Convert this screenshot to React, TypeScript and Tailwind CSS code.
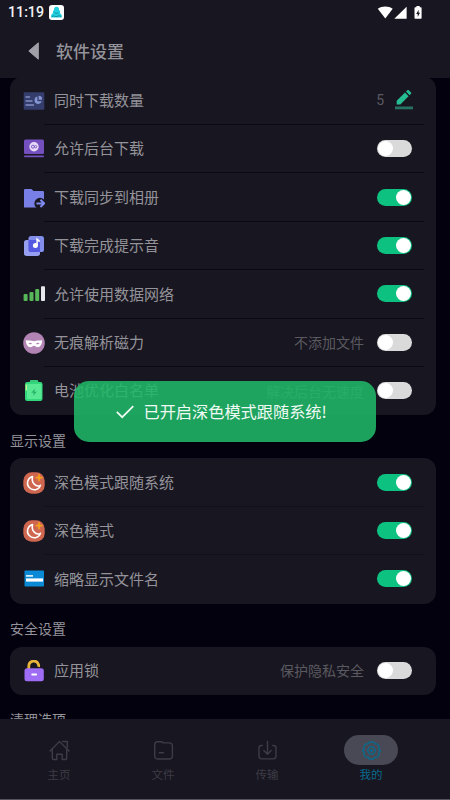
import React, { useState } from 'react';

interface SettingItem {
  id: string;
  label: string;
  icon: React.ReactNode;
  note?: string;
  checked?: boolean;
  count?: number;
}

interface SettingGroup {
  title?: string;
  soft?: boolean;
  items: SettingItem[];
}

const TaskIcon = () => (
  <svg viewBox="0 0 22 22" className="size-[22px]">
    <rect x="0.7" y="2.2" width="20.6" height="17.6" rx="1" fill="#343d6b" />
    <path d="M3 7h3.6M3 11h6M3 15h7.5" stroke="#8290c4" strokeWidth="1.3" strokeLinecap="round" />
    <path d="M14.4 6.6a3.7 3.7 0 1 0 4.400 4.600h-4.400z" fill="#8496d4" />
    <path d="M15.600 5.700a3.700 3.700 0 0 1 3.500 4h-3.500z" fill="#8496d4" />
  </svg>
);

const BackgroundIcon = () => (
  <svg viewBox="0 0 22 22" className="size-[22px]">
    <rect x="1" y="1.500" width="20" height="14.5" rx="1.5" fill="#7450bf" />
    <rect x="1" y="17.500" width="20" height="1.7" rx="0.8" fill="#7450bf" />
    <circle cx="11" cy="8.7" r="4.7" fill="#e6daf8" />
    <circle cx="9.900" cy="8.700" r="1.500" fill="none" stroke="#7450bf" strokeWidth="0.900" />
    <circle cx="12.600" cy="8.700" r="1.200" fill="none" stroke="#7450bf" strokeWidth="0.800" />
  </svg>
);

const AlbumIcon = () => (
  <svg viewBox="0 0 22 22" className="size-[22px]">
    <path d="M1 3.2a1.2 1.2 0 0 1 1.2-1.2h6.2l2.2 2h9.2a1.2 1.2 0 0 1 1.2 1.2V20.5H1z" fill="#7880e8" />
    <circle cx="17" cy="16.4" r="5.600" fill="#181620" />
    <path d="M13.4 16.4h7.400M17.400 12.800l3.800 3.600-3.800 3.600" fill="none" stroke="#7f8af0" strokeWidth="2" />
  </svg>
);

const SoundIcon = () => (
  <svg viewBox="0 0 22 22" className="size-[22px]">
    <rect x="1" y="5" width="16" height="16" rx="2.6" fill="#97a0f0" />
    <rect x="5.5" y="1" width="15.5" height="16" rx="2.6" fill="#838eec" />
    <path d="M5.5 5h8.6A2.9 2.9 0 0 1 17 8v9H8.1a2.6 2.6 0 0 1-2.6-2.6z" fill="#5558e0" />
    <circle cx="12.400" cy="10.4" r="2.500" fill="#fff" />
    <path d="M14.100 10.4V4.2l2.600 2.400" fill="none" stroke="#fff" strokeWidth="1.500" />
  </svg>
);

const SignalIcon = () => (
  <svg viewBox="0 0 22 22" className="size-[22px]">
    <rect x="0.6" y="11" width="4" height="7" rx="1" fill="#57b85a" />
    <rect x="6.500" y="9" width="4" height="9" rx="1" fill="#57b85a" />
    <rect x="12.200" y="6" width="4" height="12" rx="1" fill="#57b85a" />
    <rect x="18" y="3.200" width="4" height="14.800" rx="1" fill="#e6e8ec" />
  </svg>
);

const MaskIcon = () => (
  <svg viewBox="0 0 22 22" className="size-[22px]">
    <circle cx="11" cy="11" r="10.8" fill="#b184b4" />
    <path
      d="M2.8 8.2c2.8.5 5.5 0 8.2 1 2.7-1 5.4-.5 8.2-1-.2 4-1.8 7-4.6 7-1.700 0-2.200-1.400-3.600-1.400S9.100 15.200 7.400 15.200c-2.800 0-4.400-3-4.600-7z"
      fill="#fff"
    />
    <path d="M5.4 11.400c1-1 2.800-1 3.600.3-1 .8-2.600.7-3.600-.3zM16.600 11.400c-1-1-2.800-1-3.600.3 1 .8 2.600.7 3.600-.3z" fill="#b184b4" />
  </svg>
);

const BatteryIcon = () => (
  <svg viewBox="0 0 22 22" className="size-[22px]">
    <rect x="6.8" y="0" width="8.5" height="5" rx="1.4" fill="#37c87c" />
    <rect x="2" y="2" width="17.500" height="19" rx="2.200" fill="#32d67b" />
    <rect x="4" y="4" width="14.500" height="15" rx="1.200" fill="#59e894" />
    <path d="M3.300 4.500v6" stroke="#d6f58a" strokeWidth="1.200" />
    <path d="M12.200 8.500l-4 4.300h2.500l-.5 3.200 3.600-4.300h-2.400z" fill="#25b568" />
  </svg>
);

const MoonIcon = () => (
  <svg viewBox="0 0 22 22" className="size-[22px]">
    <rect x="0.3" y="0.3" width="21.400" height="21.400" rx="8.500" fill="#cf6650" />
    <path d="M9.600 4.600a6.700 6.700 0 1 0 7.900 8.700c-4.500 2.200-9.600-2.400-7.900-8.700z" fill="none" stroke="#fff" strokeWidth="1.500" strokeLinejoin="round" />
    <path d="M16 2.800v5.600M13.200 5.600h5.600" stroke="#f6a21b" strokeWidth="1.700" strokeLinecap="round" />
  </svg>
);

const FileNameIcon = () => (
  <svg viewBox="0 0 22 22" className="size-[22px]">
    <rect x="1.500" y="2.500" width="19.500" height="16" rx="0.800" fill="#0a8ad6" />
    <path d="M3 7.900h7" stroke="#fff" strokeWidth="1.500" />
    <path d="M3 12h17" stroke="#fff" strokeWidth="3.200" />
  </svg>
);

const LockIcon = () => (
  <svg viewBox="0 0 22 22" className="size-[22px]">
    <path d="M5.800 9V6a5 5 0 0 1 9.600-1.800c.3.700.4 1.700.1 2.700" fill="none" stroke="#eab53b" strokeWidth="2.800" />
    <rect x="1.500" y="8.300" width="19.300" height="13" rx="2.500" fill="#9f6cf5" />
    <path d="M9.200 14.500h4" stroke="#fff" strokeWidth="1.800" strokeLinecap="round" />
  </svg>
);

const EditIcon = () => (
  <svg viewBox="0 0 18 20" className="-mr-px h-5 w-[18px]">
    <path d="M1.700 14.500v-3.700l8.300-8.200 3.600 3.600-8.300 8.300z" fill="#26bd92" />
    <path d="M11 1.600l1.400-1.400a1 1 0 0 1 1.400 0l2.200 2.200a1 1 0 0 1 0 1.400l-1.400 1.400z" fill="#26bd92" />
    <rect x="0" y="16.500" width="18" height="2.800" fill="#267265" />
  </svg>
);

const groups: SettingGroup[] = [
  {
    items: [
      { id: 'count', label: '同时下载数量', icon: <TaskIcon />, count: 5 },
      { id: 'background', label: '允许后台下载', icon: <BackgroundIcon />, checked: false },
      { id: 'album', label: '下载同步到相册', icon: <AlbumIcon />, checked: true },
      { id: 'sound', label: '下载完成提示音', icon: <SoundIcon />, checked: true },
      { id: 'mobile', label: '允许使用数据网络', icon: <SignalIcon />, checked: true },
      { id: 'private', label: '无痕解析磁力', icon: <MaskIcon />, note: '不添加文件', checked: false },
      { id: 'battery', label: '电池优化白名单', icon: <BatteryIcon />, note: '解决后台无速度', checked: false },
    ],
  },
  {
    title: '显示设置',
    soft: true,
    items: [
      { id: 'follow', label: '深色模式跟随系统', icon: <MoonIcon />, checked: true },
      { id: 'dark', label: '深色模式', icon: <MoonIcon />, checked: true },
      { id: 'filename', label: '缩略显示文件名', icon: <FileNameIcon />, checked: true },
    ],
  },
  {
    title: '安全设置',
    items: [{ id: 'lock', label: '应用锁', icon: <LockIcon />, note: '保护隐私安全', checked: false }],
  },
  { title: '清理选项', items: [] },
];

const Toggle: React.FC<{ initial: boolean }> = ({ initial }) => {
  const [on, setOn] = useState<boolean>(initial);

  return (
    <button
      role="switch"
      aria-checked={on}
      onClick={() => setOn(!on)}
      className={`flex h-[17px] w-[35px] items-center rounded-full px-px ${on ? 'justify-end bg-[#0dc280]' : 'justify-start bg-[#dadada]'}`}
    >
      <span className="size-[15px] rounded-full bg-white" />
    </button>
  );
};

const SettingRow: React.FC<{ item: SettingItem; border: string }> = ({ item, border }) => (
  <div className="flex h-[48.400px] items-center pl-[13px]">
    {item.icon}
    <div className={`mr-3 ml-[-1px] flex h-full flex-1 items-center border-b pr-3 pl-[10px] ${border}`}>
      <span className="flex-1 text-[15px] text-[#94939a]">{item.label}</span>
      {item.note && <span className="mr-[13px] text-sm text-[#5b5a60]">{item.note}</span>}
      {item.count !== undefined ? (
        <>
          <span className="mr-[11px] font-[Roboto] text-sm text-[#5b5a60]">{item.count}</span>
          <EditIcon />
        </>
      ) : (
        <Toggle initial={item.checked ?? false} />
      )}
    </div>
  </div>
);

const StatusBar = () => (
  <div className="flex h-[25px] items-center pr-[27px] pl-2">
    <span className="w-[36px] pt-px font-[Roboto] text-[14.200px] font-medium text-[#f2f2f4]">11:19</span>
    <span className="ml-[5px] flex size-[15px] items-center justify-center rounded-[3px] bg-white">
      <svg viewBox="0 0 15 15" className="size-[15px]">
        <path d="M7.500 1.800c1.800 0 2.800 1.400 2.600 3.200 1.300 1 1.300 2.300.8 3.200 1.700.8 2.300 2.300 1.800 4.300H2.200c-.5-2 .1-3.500 1.900-4.300-.5-1.300-.2-2.400.9-3.200-.2-1.800.7-3.200 2.500-3.200z" fill="#22cfdf" />
        <path d="M5.500 7.500c1 1 2.700 1.200 4 .2M3 11.500c2-1.500 3.500.8 5 0s2.500-1 4 0" fill="none" stroke="#13919f" strokeWidth="1" />
      </svg>
    </span>
    <svg viewBox="0 0 46 14" className="ml-auto h-[14px] w-[46px] -translate-y-[0.5px] fill-white">
      <path d="M0.800 3.200C5 .1 11.500.1 15.700 3.200L8.300 13z" />
      <path d="M29.600 1.300v12H17.300z" />
      <path d="M38.200 1.800h1.200V.5h3.300v1.300h1.200c.4 0 .7.3.7.7v10c0 .5-.3.800-.7.800h-5.700c-.4 0-.7-.3-.7-.8v-10c0-.4.3-.7.7-.7z" />
      <path d="M41.600 4.200L39.200 8.400h1.500v3.200l2.300-4.400h-1.400z" fill="#181620" />
    </svg>
  </div>
);

const HomeIcon = () => (
  <>
    <path d="M1 11L10.500 1.500 20 11M3.300 9.300v9c0 .7.500 1.200 1.200 1.200h3.300v-5.200h5.400v5.200h3.300c.7 0 1.200-.5 1.200-1.200v-9" />
    <path d="M13.700 1.500h4.600v6" />
  </>
);

const FolderIcon = () => (
  <>
    <path d="M1.700 4.700c0-1.900 1-2.900 2.900-2.900h3.200c1.200 0 1.800.3 2.600 1.100h5.700c2.200 0 3.300 1.100 3.300 3.300v9.500c0 2.200-1.100 3.300-3.300 3.300H5c-2.200 0-3.300-1.100-3.300-3.300z" />
    <path d="M6.200 12.800h4.200" />
  </>
);

const TransferIcon = () => (
  <>
    <path d="M5.200 5.500H4.500c-1.700 0-2.500.8-2.500 2.500v8c0 1.900 1 2.900 2.900 2.900h11.200c1.900 0 2.900-1 2.900-2.900V8c0-1.700-.8-2.500-2.500-2.500h-.7" />
    <path d="M10.500 1.300V14M6.800 10.600l3.700 3.700 3.700-3.700" />
  </>
);

const MineIcon = () => (
  <>
    <path d="M8.500 2h4l1.400 1.800 2.700.3 1.600 2.700-.6 1.900 1.900 1.800-1.900 1.800.6 1.900-1.600 2.700-2.700.3L12.500 19h-4l-1.400-1.800-2.700-.3-1.600-2.700.6-1.900-1.900-1.800 1.900-1.800-.6-1.900 1.600-2.700 2.700-.3z" />
    <path d="M8.500 7h4l2 3.500-2 3.500h-4l-2-3.500z" />
    <circle cx="10.500" cy="10.500" r="0.900" />
  </>
);

const tabs = [
  { label: '主页', icon: <HomeIcon />, active: false },
  { label: '文件', icon: <FolderIcon />, active: false },
  { label: '传输', icon: <TransferIcon />, active: false },
  { label: '我的', icon: <MineIcon />, active: true },
];

const App: React.FC = () => {
  return (
    <div className="relative flex h-[800px] w-[450px] flex-col overflow-hidden bg-[#03010e] font-['Noto_Sans_CJK_SC',sans-serif]">
      <header className="h-[78px] shrink-0 bg-[#181620]">
        <StatusBar />
        <div className="flex h-[52px] items-center pl-7">
          <svg viewBox="0 0 12 18" className="h-[18px] w-3">
            <path d="M10.300.8v16.400L.8 9z" fill="#a19fa8" stroke="#a19fa8" strokeLinejoin="round" />
          </svg>
          <h1 className="ml-4 text-[17px] font-medium text-[#94939a]">软件设置</h1>
        </div>
      </header>

      <main className="min-h-0 flex-1 overflow-hidden pr-[14px] pl-[10px]">
        <div className="-mt-[1.400px]">
          {groups.map((group, i) => (
            <section key={i}>
              {group.title && (
                <h2 className="flex h-[43px] items-center pt-[6px] text-sm text-[#94939a]">{group.title}</h2>
              )}
              {group.items.length > 0 && (
                <div className="rounded-[12px] bg-[#181620]">
                  {group.items.map((item, index) => (
                    <SettingRow
                      key={item.id}
                      item={item}
                      border={
                        index === group.items.length - 1
                          ? 'border-transparent'
                          : group.soft
                            ? 'border-[#12101a]'
                            : 'border-[#0b0915]'
                      }
                    />
                  ))}
                </div>
              )}
            </section>
          ))}
        </div>
      </main>

      <nav className="flex h-[81px] shrink-0 border-b border-[#54525b] bg-[#181620] pt-4 pr-[27px] pl-[7px]">
        {tabs.map((tab) => (
          <div
            key={tab.label}
            className={`flex flex-1 flex-col items-center ${tab.active ? 'text-[#0b6a8c]' : 'text-[#3d3c47]'}`}
          >
            <span className={`flex h-[30px] w-[54px] items-center justify-center rounded-full ${tab.active ? 'bg-[#484955]' : ''}`}>
              <svg viewBox="0 0 21 21" className="size-[21px] fill-none stroke-current" strokeWidth="1.400" strokeLinejoin="round" strokeLinecap="round">
                {tab.icon}
              </svg>
            </span>
            <span className="text-[11.500px] leading-[18px]">{tab.label}</span>
          </div>
        ))}
      </nav>

      {/* Aviso flotante */}
      <div className="absolute top-[381px] left-[74px] flex h-[61px] w-[302px] items-center rounded-[15px] bg-[#20b868]/88 pl-[42px] text-[#f0faf4]">
        <svg viewBox="0 0 18 14" className="h-[14px] w-[18px] fill-none stroke-current" strokeWidth="1.700">
          <path d="M.8 6.800l5.400 5.400L17.300 1.200" />
        </svg>
        <span className="ml-[9.500px] text-[16.200px]">已开启深色模式跟随系统!</span>
      </div>
    </div>
  );
};

export default App;
